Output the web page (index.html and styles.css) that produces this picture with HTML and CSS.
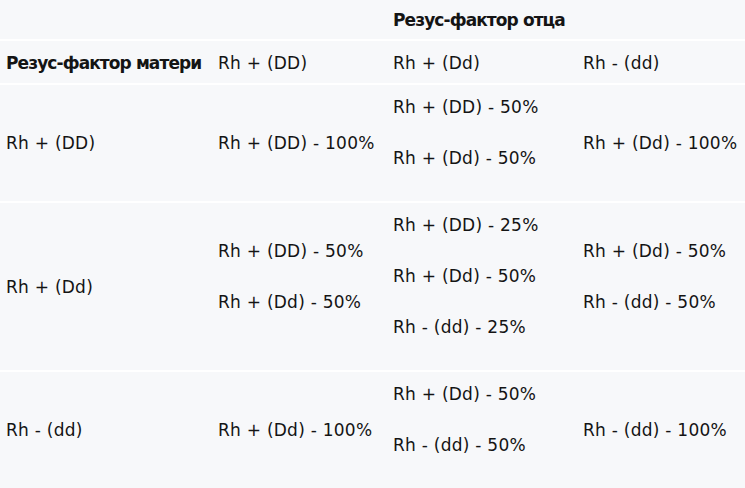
FILE: index.html
```html
<!DOCTYPE html>
<html lang="ru">
<head>
<meta charset="utf-8">
<link rel="stylesheet" href="styles.css">
</head>
<body>
<table class="rh-table">
  <colgroup>
    <col class="c1"><col class="c2"><col class="c3"><col class="c4">
  </colgroup>
  <thead>
    <tr class="head1">
      <th></th>
      <th></th>
      <th colspan="2" class="title">Резус-фактор отца</th>
    </tr>
    <tr class="head2">
      <th class="title">Резус-фактор матери</th>
      <td>Rh + (DD)</td>
      <td>Rh + (Dd)</td>
      <td>Rh - (dd)</td>
    </tr>
  </thead>
  <tbody>
    <tr>
      <td>Rh + (DD)</td>
      <td>Rh + (DD) - 100%</td>
      <td><p>Rh + (DD) - 50%</p><p>Rh + (Dd) - 50%</p></td>
      <td>Rh + (Dd) - 100%</td>
    </tr>
    <tr>
      <td>Rh + (Dd)</td>
      <td><p>Rh + (DD) - 50%</p><p>Rh + (Dd) - 50%</p></td>
      <td><p>Rh + (DD) - 25%</p><p>Rh + (Dd) - 50%</p><p>Rh - (dd) - 25%</p></td>
      <td><p>Rh + (Dd) - 50%</p><p>Rh - (dd) - 50%</p></td>
    </tr>
    <tr>
      <td>Rh - (dd)</td>
      <td>Rh + (Dd) - 100%</td>
      <td><p>Rh + (Dd) - 50%</p><p>Rh - (dd) - 50%</p></td>
      <td>Rh - (dd) - 100%</td>
    </tr>
  </tbody>
</table>
</body>
</html>
```

FILE: styles.css
```css
html, body {
  margin: 0;
  padding: 0;
  background: #f7f8fa;
}
body {
  font-family: "DejaVu Sans", Verdana, sans-serif;
  font-size: 17px;
  color: #141414;
  letter-spacing: 0.25px;
}
.rh-table {
  border-collapse: collapse;
  width: 745px;
  table-layout: fixed;
}
.c1 { width: 212px; }
.c2 { width: 175px; }
.c3 { width: 190px; }
.c4 { width: 168px; }
.rh-table th,
.rh-table td {
  text-align: left;
  vertical-align: middle;
  padding: 7px 6px;
  line-height: 30px;
  white-space: nowrap;
  font-weight: normal;
}
.rh-table tr + tr td,
.rh-table tr + tr th,
.rh-table tbody tr td {
  border-top: 2px solid #ffffff;
}
.rh-table .title {
  font-weight: bold;
  letter-spacing: -0.9px;
}
.head1 th { padding: 5px 6px 4px; }
.head2 th, .head2 td { padding: 7px 6px 5px; }
.rh-table p {
  margin: 0 0 21px;
}
```
